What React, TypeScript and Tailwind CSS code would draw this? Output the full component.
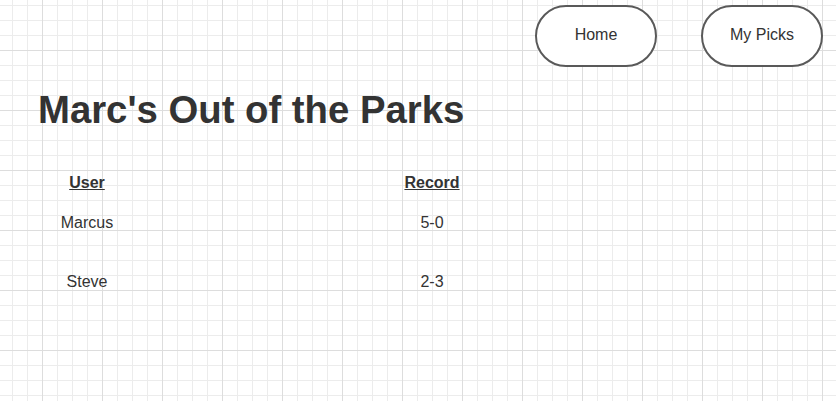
import React from "react";

const rows = [
  { user: "Marcus", record: "5-0", h: "h-[59px]" },
  { user: "Steve", record: "2-3", h: "h-[40px]" },
];

export default function App() {
  return (
    <div
      className="w-full h-screen overflow-hidden bg-white text-[#333333] [font-family:'Liberation_Sans',Arial,sans-serif] [background-image:linear-gradient(to_right,#dddddd_1px,transparent_1px),linear-gradient(to_bottom,#dddddd_1px,transparent_1px),linear-gradient(to_right,#ececec_1px,transparent_1px),linear-gradient(to_bottom,#ececec_1px,transparent_1px)] [background-size:60px_60px,60px_60px,15px_15px,15px_15px] [background-position:42px_50px,42px_50px,12px_5px,12px_5px]"
    >
      <div className="flex justify-end gap-[44px] pt-[5px] pr-[13px]">
        <button className="w-[122px] h-[62px] rounded-full border-2 border-[#595959] bg-white flex items-center justify-center pb-[3px] text-[16px] text-[#333333]">
          Home
        </button>
        <button className="w-[122px] h-[62px] rounded-full border-2 border-[#595959] bg-white flex items-center justify-center pb-[3px] text-[16px] text-[#333333]">
          My Picks
        </button>
      </div>

      <h1 className="ml-[38px] mt-[24px] text-[38.3px] leading-[38px] font-bold">
        Marc's Out of the Parks
      </h1>

      <div className="mt-[44px] pl-[30px] flex flex-col text-[16px] leading-[20px]">
        <div className="grid grid-cols-[114px_100px] gap-x-[238px] h-[40px]">
          <div className="text-center font-bold underline">User</div>
          <div className="text-center font-bold underline">Record</div>
        </div>
        {rows.map((r) => (
          <div key={r.user} className={`grid grid-cols-[114px_100px] gap-x-[238px] ${r.h}`}>
            <div className="text-center">{r.user}</div>
            <div className="text-center">{r.record}</div>
          </div>
        ))}
      </div>
    </div>
  );
}
